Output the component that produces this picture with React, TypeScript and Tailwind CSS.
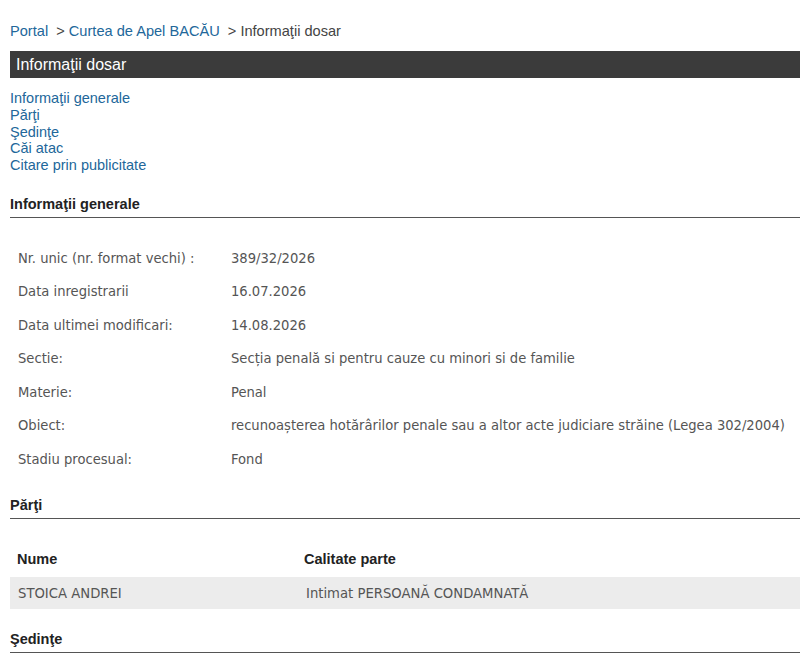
import React from 'react';

const rows: [string, string][] = [
  ['Nr. unic (nr. format vechi) :', '389/32/2026'],
  ['Data inregistrarii', '16.07.2026'],
  ['Data ultimei modificari:', '14.08.2026'],
  ['Sectie:', 'Secția penală si pentru cauze cu minori si de familie'],
  ['Materie:', 'Penal'],
  ['Obiect:', 'recunoașterea hotărârilor penale sau a altor acte judiciare străine (Legea 302/2004)'],
  ['Stadiu procesual:', 'Fond'],
];

const links = ['Informaţii generale', 'Părţi', 'Şedinţe', 'Căi atac', 'Citare prin publicitate'];

const bodyFont = { fontFamily: '"DejaVu Sans Condensed", "DejaVu Sans", Tahoma, sans-serif' };

function SectionTitle({ children }: { children: React.ReactNode }) {
  return (
    <div className="border-b border-[#555] pb-[4px] text-[14.5px] font-bold text-[#222] leading-[17px]">
      {children}
    </div>
  );
}

export default function App() {
  return (
    <div
      className="w-[800px] h-[653px] overflow-hidden bg-white pl-[10px]"
      style={{ fontFamily: '"Liberation Sans", Arial, sans-serif' }}
    >
      {/* breadcrumb */}
      <div className="pt-[23px] text-[14.6px] leading-[17px] text-[#444]">
        <span className="text-[#22679a]">Portal</span>
        <span>&nbsp; &gt; </span>
        <span className="text-[#22679a]">Curtea de Apel BACĂU</span>
        <span>&nbsp; &gt; Informaţii dosar</span>
      </div>

      {/* dark bar */}
      <div className="mt-[11px] h-[27px] bg-[#3b3b3b] pl-[6px] text-[16px] leading-[27px] text-white">
        Informaţii dosar
      </div>

      {/* anchors */}
      <div className="mt-[12px] flex flex-col text-[14.5px] leading-[16.8px] text-[#22679a]">
        {links.map(l => (
          <span key={l}>{l}</span>
        ))}
      </div>

      <div className="mt-[22px]">
        <SectionTitle>Informaţii generale</SectionTitle>
      </div>

      {/* general info */}
      <div className="mt-[29px] text-[14.6px] text-[#555]" style={bodyFont}>
        {rows.map(([k, v]) => (
          <div key={k} className="flex h-[33.5px] items-start">
            <div className="w-[221px] shrink-0 pl-[8px]">{k}</div>
            <div className="whitespace-nowrap">{v}</div>
          </div>
        ))}
      </div>

      <div className="mt-[16px]">
        <SectionTitle>Părţi</SectionTitle>
      </div>

      {/* parties table */}
      <div className="mt-[30px] text-[14.5px]">
        <div className="flex h-[28px] font-bold text-[#222]">
          <div className="w-[294px] pl-[7px]">Nume</div>
          <div>Calitate parte</div>
        </div>
        <div className="flex h-[32px] items-center bg-[#ececec] text-[14.7px] text-[#555]" style={bodyFont}>
          <div className="w-[296px] pl-[8px]">STOICA ANDREI</div>
          <div>Intimat PERSOANĂ CONDAMNATĂ</div>
        </div>
      </div>

      <div className="mt-[22px]">
        <SectionTitle>Şedinţe</SectionTitle>
      </div>
    </div>
  );
}
